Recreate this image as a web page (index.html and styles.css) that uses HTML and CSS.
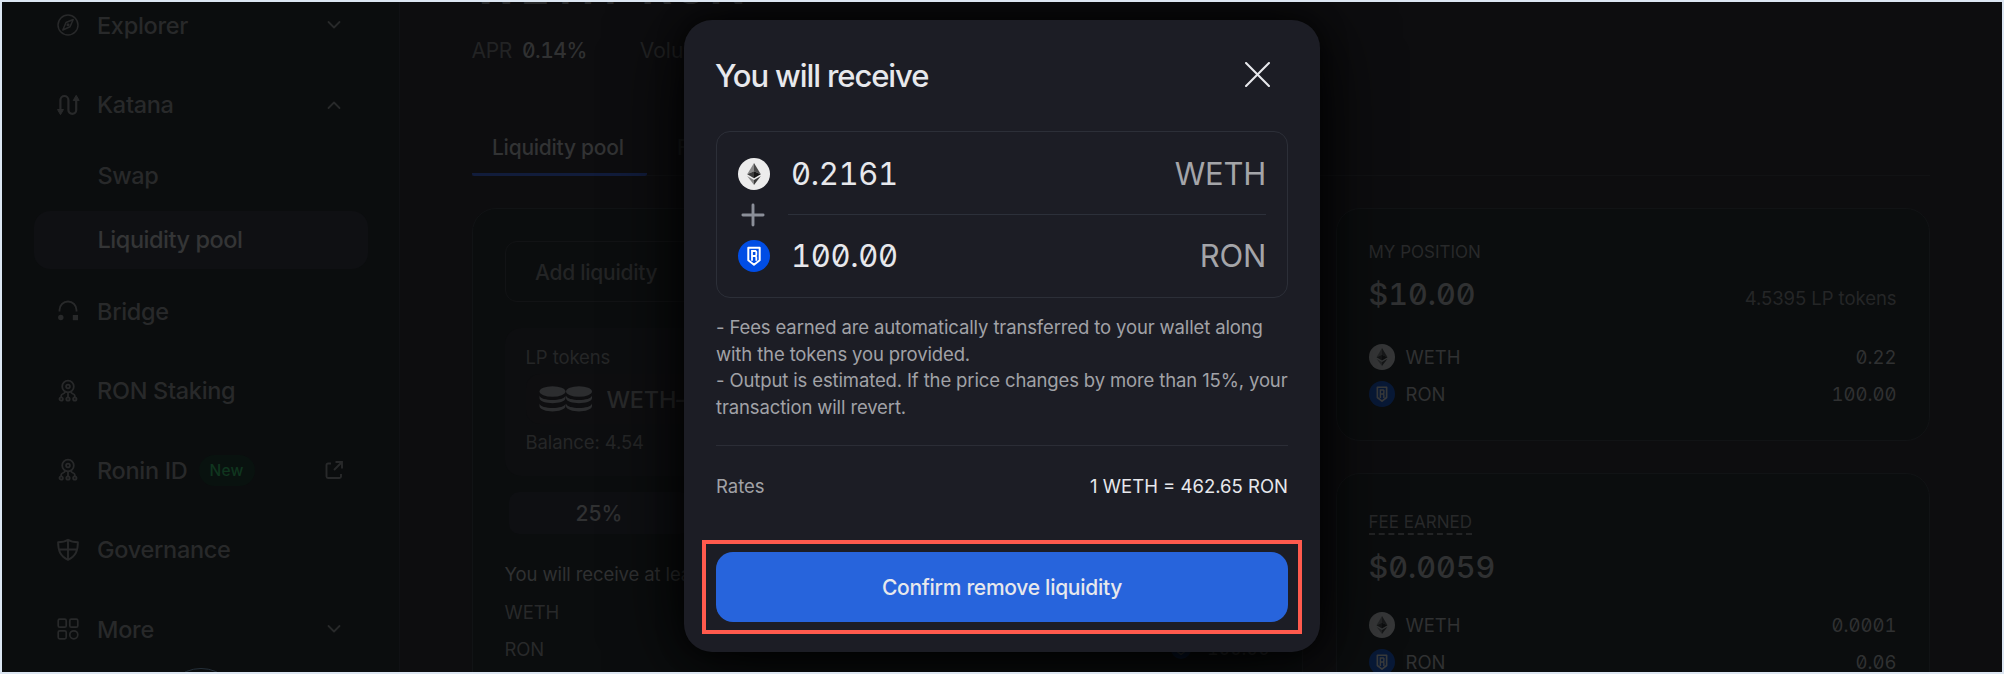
FILE: index.html
```html
<!DOCTYPE html>
<html lang="en">
<head>
<meta charset="utf-8">
<title>Katana – Remove liquidity</title>
<link rel="stylesheet" href="styles.css">
</head>
<body>
<svg class="defs" width="0" height="0" aria-hidden="true">
  <symbol id="eth" viewBox="0 0 32 32">
    <circle cx="16" cy="16" r="16" fill="#ececec"/>
    <path d="M16 5 9.200 16.200 16 13.200z" fill="#8a8a8a"/>
    <path d="M16 5v8.200l6.800 3z" fill="#4a4a4a"/>
    <path d="M9.200 16.200 16 20.200v-7z" fill="#3c3c3c"/>
    <path d="M22.800 16.200 16 20.200v-7z" fill="#161616"/>
    <path d="M9.200 18 16 27v-5z" fill="#8a8a8a"/>
    <path d="M22.800 18 16 27v-5z" fill="#3c3c3c"/>
  </symbol>
  <symbol id="ron" viewBox="0 0 32 32">
    <circle cx="16" cy="16" r="16" fill="#004de5"/>
    <path d="M10.300 7.700h11.400v12.600L16 24.700l-5.700-4.400z" fill="none" stroke="#fff" stroke-width="2" stroke-linejoin="round"/>
    <path d="M14 20.800V11h3.500l.8.800v3.200l-1 1 1 1v3.800M14 16h3.300" fill="none" stroke="#fff" stroke-width="1.800"/>
  </symbol>
  <symbol id="staking" viewBox="0 0 24 24">
    <g fill="none" stroke="currentColor" stroke-width="1.800">
      <circle cx="12" cy="7.500" r="5.800"/><circle cx="12" cy="7.500" r="1.900"/>
      <circle cx="5.200" cy="20" r="1.700"/><circle cx="12" cy="20" r="1.700"/><circle cx="18.800" cy="20" r="1.700"/>
      <path d="M12 13.300v5M8.800 12.300v1.200c0 1.300-3.600 1.300-3.600 3.200v1.600M15.200 12.300v1.200c0 1.300 3.600 1.300 3.600 3.200v1.600"/>
    </g>
  </symbol>
  <symbol id="down" viewBox="0 0 16 16"><path d="m2.500 5 5.500 5.500L13.500 5" fill="none" stroke="currentColor" stroke-width="1.800" stroke-linecap="round" stroke-linejoin="round"/></symbol>
</svg>

<div class="frame">
  <nav class="sidebar">
    <a class="nav"><svg class="nav-icon" viewBox="0 0 24 24"><g fill="none" stroke="currentColor" stroke-width="1.500" stroke-linejoin="round"><circle cx="12" cy="12" r="10"/><path d="M17.200 6.500 10 9.500 6.800 17l7.200-3.200z"/><circle cx="12" cy="11.800" r=".8"/></g></svg><span>Explorer</span><svg class="chev"><use href="#down"/></svg></a>
    <a class="nav"><svg class="nav-icon" viewBox="0 0 24 24"><path d="M5 17V7a4 4 0 0 1 8 0v10a3.900 3.900 0 0 0 7.800 0V7" fill="none" stroke="currentColor" stroke-width="2.200" transform="translate(-.6 0)"/><path d="M1.500 16.500h6l-3 5.200zM17.200 7.500h6l-3-5.200z" fill="currentColor" stroke="currentColor" stroke-linejoin="round"/></svg><span>Katana</span><svg class="chev up"><use href="#down"/></svg></a>
    <div class="submenu">
      <a class="sub">Swap</a>
      <a class="sub active">Liquidity pool</a>
    </div>
    <a class="nav"><svg class="nav-icon" viewBox="0 0 24 24"><path d="M3.500 12.500V11a8.500 8.500 0 0 1 17 0v1.500" fill="none" stroke="currentColor" stroke-width="1.800"/><circle cx="4.800" cy="18.500" r="2.700" fill="currentColor"/><rect x="16.800" y="16" width="5.200" height="5.200" fill="currentColor"/></svg><span>Bridge</span></a>
    <a class="nav"><svg class="nav-icon"><use href="#staking"/></svg><span>RON Staking</span></a>
    <a class="nav"><svg class="nav-icon"><use href="#staking"/></svg><span>Ronin ID</span><b class="tag">New</b><svg class="ext" viewBox="0 0 18 18"><path d="M6 2.500H3a1.500 1.500 0 0 0-1.500 1.500v11.500A1.500 1.500 0 0 0 3 17h11.500a1.500 1.500 0 0 0 1.500-1.500V13M10.500 1H17v6.500M17 1 9 9" fill="none" stroke="currentColor" stroke-width="1.900"/></svg></a>
    <a class="nav"><svg class="nav-icon" viewBox="0 0 24 24"><path d="M12 1.800C9 3.800 5.500 4.300 2.100 4.300c0 8.200 2 13.700 9.900 17.500 7.900-3.800 9.900-9.300 9.900-17.500C18.500 4.300 15 3.800 12 1.800zM12 1.800v20M2.800 11.500h18.400" fill="none" stroke="currentColor" stroke-width="1.900" stroke-linejoin="round"/></svg><span>Governance</span></a>
    <a class="nav"><svg class="nav-icon" viewBox="0 0 24 24"><g fill="none" stroke="currentColor" stroke-width="1.700"><rect x="2.200" y="2.200" width="8" height="8" rx="1.500"/><rect x="13.800" y="2.200" width="8" height="8" rx="1.500"/><rect x="2.200" y="13.800" width="8" height="8" rx="1.500"/><circle cx="17.800" cy="17.800" r="4"/></g></svg><span>More</span><svg class="chev"><use href="#down"/></svg></a>
    <div class="orb"></div>
  </nav>

  <main class="main">
    <h1 class="pair">WETH–RON</h1>
    <div class="stats"><span>APR</span><b class="num">0.14%</b><span class="volume">Volume</span></div>
    <div class="tabs"><a class="tab selected">Liquidity pool</a><a class="tab">Farm</a></div>
    <div class="columns">
      <section class="card form">
        <div class="switch">Add liquidity</div>
        <div class="lp">
          <div class="lp-label">LP tokens</div>
          <div class="lp-token"><svg class="coins" viewBox="0 0 54 26"><g fill="currentColor"><ellipse cx="13.500" cy="5.500" rx="13" ry="5.200"/><path d="M.5 9.500c1 6 25 6 26 0v2.800c-1 6.500-25 6.500-26 0zM.5 17.500c1 6 25 6 26 0v2.800c-1 6.800-25 6.800-26 0z"/><ellipse cx="40" cy="5.500" rx="13" ry="5.200"/><path d="M27 9.500c1 6 25 6 26 0v2.800c-1 6.500-25 6.500-26 0zM27 17.500c1 6 25 6 26 0v2.800c-1 6.800-25 6.800-26 0z"/></g></svg>WETH–RON LP</div>
          <div class="lp-label">Balance: 4.54</div>
        </div>
        <div class="percents"><span>25%</span><span>50%</span><span>75%</span><span>100%</span></div>
        <div class="out lead">You will receive at least</div>
        <div class="out"><span>WETH</span></div>
        <div class="out"><span>RON</span><span class="out-value num"><svg class="mini"><use href="#ron"/></svg>100.00</span></div>
      </section>
      <div class="aside">
        <section class="card position">
          <div class="caption">MY POSITION</div>
          <div class="amount"><strong class="num">$10.00</strong><span>4.5395 LP tokens</span></div>
          <div class="token"><svg class="coin"><use href="#eth"/></svg>WETH<span class="num">0.22</span></div>
          <div class="token"><svg class="coin"><use href="#ron"/></svg>RON<span class="num">100.00</span></div>
        </section>
        <section class="card fees">
          <div class="caption"><span class="hint">FEE EARNED</span></div>
          <div class="amount"><strong class="num">$0.0059</strong></div>
          <div class="token"><svg class="coin"><use href="#eth"/></svg>WETH<span class="num">0.0001</span></div>
          <div class="token"><svg class="coin"><use href="#ron"/></svg>RON<span class="num">0.06</span></div>
        </section>
      </div>
    </div>
  </main>

  <div class="modal">
    <header class="modal-head"><h2>You will receive</h2><svg class="close" viewBox="0 0 24 24"><path d="m1 1 22 22M23 1 1 23" stroke="currentColor" stroke-width="2" stroke-linecap="round"/></svg></header>
    <div class="receive">
      <div class="line"><svg class="big"><use href="#eth"/></svg><span class="qty num">0.2161</span><span class="sym">WETH</span></div>
      <div class="plus-line"><svg class="plus" viewBox="0 0 24 24"><path d="M12 1.900v20.200M1.900 12h20.200" stroke="currentColor" stroke-width="2.900" stroke-linecap="round"/></svg><i></i></div>
      <div class="line"><svg class="big"><use href="#ron"/></svg><span class="qty num">100.00</span><span class="sym">RON</span></div>
    </div>
    <p class="notes">- Fees earned are automatically transferred to your wallet along<br>with the tokens you provided.<br>- Output is estimated. If the price changes by more than 15%, your<br>transaction will revert.</p>
    <div class="rates"><span>Rates</span><b>1 WETH = 462.65 RON</b></div>
    <div class="highlight"><button class="confirm">Confirm remove liquidity</button></div>
  </div>
</div>
</body>
</html>
```

FILE: styles.css
```css
* { box-sizing: border-box; }
body {
  margin: 0;
  background: #dce6f2;
  font-family: Inter, "Liberation Sans", sans-serif;
  color: #28292a;
}
.defs { position: absolute; }
svg { display: block; flex: none; }
.num { font-feature-settings: "tnum", "zero"; font-weight: inherit; }

.frame {
  position: relative;
  display: flex;
  width: 2004px;
  height: 674px;
  border: 2px solid #dce6f2;
  background: #0d0d0f;
  overflow: hidden;
}

/* Sidebar */
.sidebar {
  width: 398px;
  height: 670px;
  flex: none;
  overflow: hidden;
  background: #0b0d0e;
  border-right: 1px solid #101114;
  padding: 0 31.500px 0 32px;
}
.nav {
  display: flex;
  align-items: center;
  height: 79.500px;
  padding: 0 25.500px 0 22px;
  font-size: 23.500px;
  font-weight: 500;
  letter-spacing: -.3px;
}
.nav:first-child { margin-top: -16.750px; }
.nav-icon { width: 24px; height: 24px; margin-right: 17px; }
.chev { width: 16px; height: 16px; margin-left: auto; }
.up { transform: rotate(180deg); }
.ext { width: 18px; height: 18px; margin-left: auto; margin-right: -1px; }
.tag {
  margin-left: 11px;
  height: 31px;
  padding: 0 11px;
  border-radius: 16px;
  background: #09120f;
  color: #10361f;
  font-size: 15.500px;
  font-weight: 500;
  line-height: 31px;
  letter-spacing: .2px;
}
.submenu {
  display: flex;
  flex-direction: column;
  gap: 5.500px;
  height: 127.200px;
  padding-top: 2.750px;
}
.sub {
  height: 58px;
  padding-left: 63.500px;
  border-radius: 16px;
  font-size: 23.500px;
  font-weight: 500;
  line-height: 58px;
  letter-spacing: -.450px;
}
.active { background: #0f1013; color: #343536; }
.orb {
  width: 76px;
  height: 76px;
  margin: -1px auto 0;
  border: 1px solid #25303a;
  border-radius: 50%;
}

/* Main column */
.main { flex: none; width: 1530px; padding-left: 71.500px; }
.pair {
  height: 38px;
  margin: -34px 0 0;
  font-size: 48px;
  font-weight: 600;
  line-height: 38px;
}
.stats {
  display: flex;
  align-items: center;
  height: 30px;
  margin-top: 29px;
  font-size: 21px;
  letter-spacing: -.3px;
  color: #222324;
}
.stats b { margin-left: 10px; color: #303132; font-weight: 500; letter-spacing: -.5px; }
.volume { margin-left: 53px; letter-spacing: 0; }
.tabs {
  display: flex;
  height: 60px;
  margin-top: 51px;
  border-bottom: 1px solid #111214;
}
.tab {
  padding: 0 20.500px;
  font-size: 21px;
  font-weight: 500;
  line-height: 64px;
  letter-spacing: -.250px;
  white-space: nowrap;
  color: #1b1c1d;
}
.tab + .tab { margin-left: 10px; }
.selected {
  width: 175px;
  height: 60px;
  border-bottom: 3px solid #111c3b;
  border-radius: 2px;
  color: #323334;
}
.columns { display: flex; gap: 33px; margin-top: 32px; }
.card {
  border: 1px solid #111315;
  border-radius: 24px;
  background: #0b0d0e;
}
.form { flex: none; width: 831px; height: 620px; padding: 32px; }
.switch {
  height: 61px;
  padding-left: 29.500px;
  border: 1px solid #121315;
  border-radius: 12px;
  font-size: 21px;
  font-weight: 500;
  line-height: 61px;
  letter-spacing: -.250px;
  color: #232425;
}
.lp {
  height: 148px;
  margin-top: 26px;
  padding: 14px 21px;
  border-radius: 16px;
  background: #0d0e10;
}
.lp-label { height: 30px; font-size: 18.500px; line-height: 30px; letter-spacing: -.1px; color: #252627; }
.lp-token {
  display: flex;
  align-items: center;
  gap: 14px;
  width: 260px;
  height: 50px;
  margin: 2px 0 3px;
  padding-left: 13px;
  border-radius: 14px;
  background: #0e0e10;
  font-size: 23.500px;
  font-weight: 500;
  letter-spacing: -.2px;
  white-space: nowrap;
}
.coins { width: 54px; height: 26px; color: #2c2d2f; }
.percents { display: flex; gap: 12px; margin: 16px 4px 0; }
.percents span {
  flex: 1;
  height: 42px;
  border-radius: 10px;
  background: #0e0f12;
  font-size: 21px;
  font-weight: 500;
  line-height: 44px;
  text-align: center;
  color: #303132;
}
.percents span:first-child { flex: none; width: 181px; }
.out {
  display: flex;
  justify-content: space-between;
  align-items: center;
  height: 37px;
  font-size: 18.500px;
  letter-spacing: -.1px;
}
.lead { margin-top: 21.500px; height: 37.500px; color: #303132; }
.out-value { display: flex; align-items: center; gap: 16px; font-size: 18px; }
.mini { width: 20px; height: 20px; opacity: .15; }

.aside { flex: none; width: 594px; }
.position { height: 233px; padding: 28px 32px; }
.fees { height: 300px; margin-top: 32px; padding: 33px 32px; }
.caption { height: 32px; font-size: 17px; line-height: 31px; }
.hint { padding-bottom: 1px; border-bottom: 2px dashed #232425; }
.amount {
  display: flex;
  justify-content: space-between;
  align-items: center;
  height: 48px;
  color: #252627;
  font-size: 18.500px;
}
.amount span { padding-top: 9px; letter-spacing: -.050px; }
.amount strong { font-size: 30.500px; font-weight: 500; color: #303132; }
.fees .amount { height: 54px; }
.token {
  display: flex;
  align-items: center;
  height: 37px;
  font-size: 18.500px;
  color: #303132;
}
.amount + .token { margin-top: 21.500px; }
.fees .amount + .token { margin-top: 13px; }
.token span { margin-left: auto; }
.coin { width: 26px; height: 26px; margin-right: 11px; opacity: .19; }

/* Dialog */
.modal {
  position: absolute;
  top: 17.500px;
  left: 682px;
  width: 636px;
  height: 632px;
  padding: 31px 32px;
  border-radius: 28px;
  background: #1c1d25;
  box-shadow: 0 8px 76px #000, 0 0 24px rgba(0, 0, 0, .6);
}
.modal-head {
  display: flex;
  justify-content: space-between;
  align-items: center;
  height: 48px;
  padding-right: 18px;
  color: #e7e8ec;
}
.modal-head h2 { margin: 1px 0 0 -1px; font-size: 31px; font-weight: 500; letter-spacing: -1.100px; }
.close { width: 25px; height: 25px; }
.receive {
  height: 167px;
  margin-top: 32.500px;
  padding: 19.500px 21px 0;
  border: 1px solid #2c2f38;
  border-radius: 14px;
}
.line { display: flex; align-items: center; height: 44px; font-size: 31px; }
.big { width: 32px; height: 32px; }
.qty { margin-left: 21px; color: #e7e8ec; letter-spacing: -.350px; }
.sym { margin-left: auto; color: #a4a5a9; letter-spacing: -.250px; }
.plus-line { display: flex; align-items: center; height: 38px; }
.plus { width: 24px; height: 24px; margin: 0 23.500px 0 2.500px; color: #8b8f99; }
.plus-line i { flex: 1; height: 1px; background: #2c303a; }
.notes {
  height: 132px;
  margin: 16px 0 0;
  padding-bottom: 26px;
  border-bottom: 1px solid #2b2d36;
  font-size: 18.500px;
  line-height: 26.500px;
  letter-spacing: -.130px;
  color: #a1a2a7;
  white-space: nowrap;
}
.rates {
  display: flex;
  justify-content: space-between;
  align-items: center;
  height: 80px;
  font-size: 18.500px;
  color: #a1a2a7;
}
.rates b { color: #e7e8ec; font-weight: 400; }
.highlight {
  height: 94px;
  margin: 14px -14px 0;
  padding: 8px 10px;
  border: 4px solid #ff5a4d;
}
.confirm {
  display: block;
  width: 100%;
  height: 70px;
  border: 0;
  border-radius: 17px;
  background: #2764dc;
  color: #e7e8ec;
  font: 500 21px Inter, "Liberation Sans", sans-serif;
  letter-spacing: -.270px;
}
```
